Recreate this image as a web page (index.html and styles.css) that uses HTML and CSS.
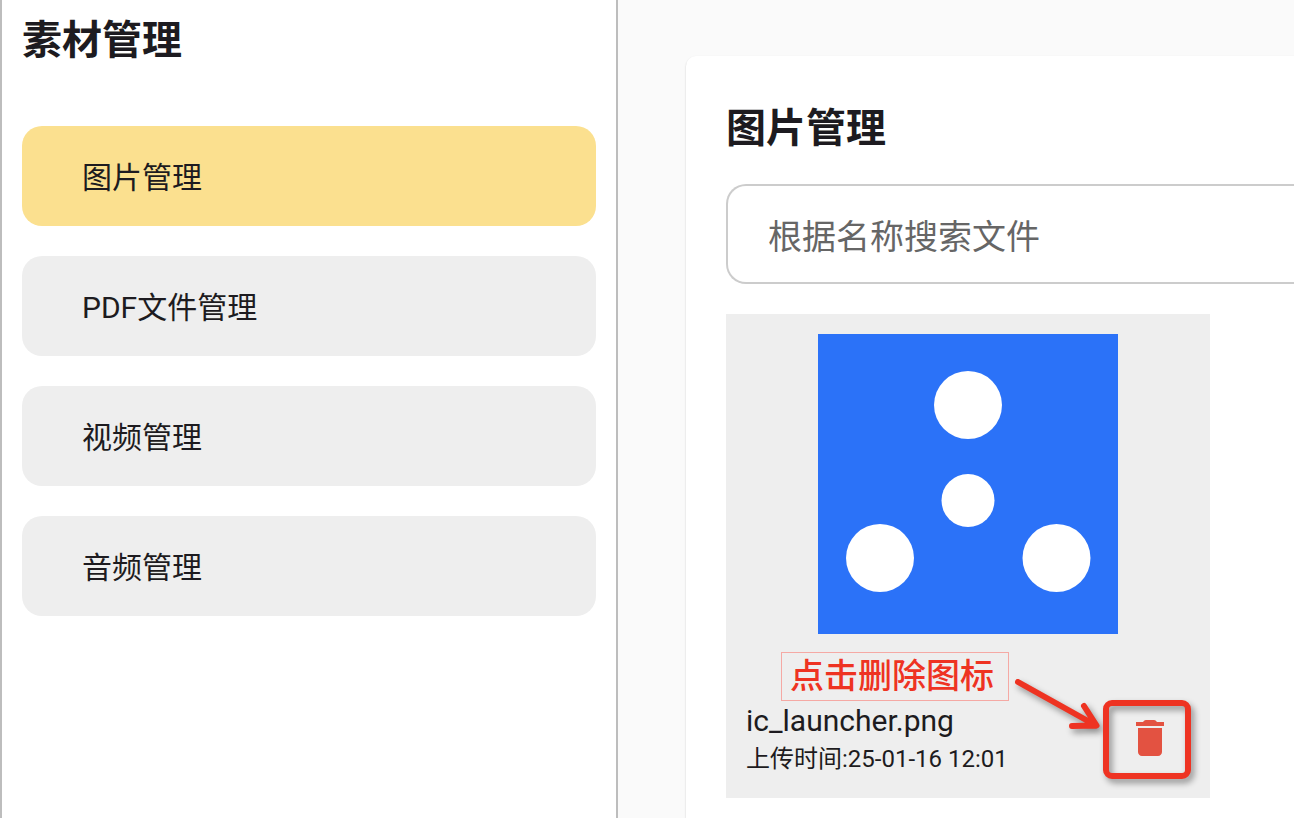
FILE: index.html
```html
<!DOCTYPE html>
<html lang="zh-CN">
<head>
    <meta charset="UTF-8">
    <meta name="viewport" content="width=device-width, initial-scale=1.0">
    <title>素材管理</title>
    <link rel="stylesheet" href="styles.css">
</head>
<body>
    <!-- Sidebar -->
    <div class="sidebar">
        <h1 class="title">素材管理</h1>
        <nav class="nav-links">
            <a href="#" class="active">图片管理</a>
            <a href="#">PDF文件管理</a>
            <a href="#">视频管理</a>
            <a href="#">音频管理</a>
        </nav>
    </div>

    <!-- Main Content -->
    <div class="content">
        <div class="panel">
            <h2 class="title">图片管理</h2>
            <input type="text" class="search-bar" placeholder="根据名称搜索文件" aria-label="根据名称搜索文件">

            <div class="file-card">
                <svg class="preview" viewBox="0 0 300 300" role="img" aria-label="ic_launcher.png">
                    <rect width="300" height="300" fill="#2b72f8"/>
                    <g fill="#fff">
                        <circle cx="150" cy="71" r="34"/>
                        <circle cx="150" cy="166.500" r="26.500"/>
                        <circle cx="62" cy="224" r="34"/>
                        <circle cx="238.500" cy="224" r="34"/>
                    </g>
                </svg>
                <div class="file-row">
                    <div class="file-info">
                        <div class="file-name">ic_launcher.png</div>
                        <div class="file-time">上传时间:25-01-16 12:01</div>
                    </div>
                    <button type="button" class="delete-btn" aria-label="删除">
                        <svg viewBox="0 0 24 24" fill="currentColor">
                            <path d="M6 19c0 1.1.9 2 2 2h8c1.1 0 2-.9 2-2V7H6v12zM19 4h-3.500l-.7-.7c-.2-.2-.45-.3-.7-.3H9.900c-.25 0-.5.1-.7.3L8.500 4H5v2h14V4z"/>
                        </svg>
                    </button>
                </div>

                <!-- Hint over the card -->
                <div class="hint">点击删除图标</div>
                <svg class="hint-marks" viewBox="0 0 484 484" aria-hidden="true">
                    <path d="M292 368L370 411.500M358 392l12.500 19.500L346 412"/>
                    <rect x="380" y="389" width="82" height="73" rx="6"/>
                </svg>
            </div>
        </div>
    </div>
</body>
</html>
```
FILE: styles.css
```css
/* Global Styles */
* {
    box-sizing: border-box;
}
body {
    margin: 0;
    font-family: Roboto, 'Noto Sans CJK SC', sans-serif;
    background-color: #fafafa;
    color: #1d1b20;
    display: flex;
    min-height: 100vh;
    overflow-x: hidden;
}
.title {
    margin: 0;
    font-size: 40px;
    line-height: 50px;
    font-weight: bold;
}

/* Sidebar Styles */
.sidebar {
    flex: 0 0 618px;
    padding: 16px 20px;
    background-color: #fff;
    border-left: 2px solid #bdbdbd;
    border-right: 2px solid #bdbdbd;
}
.nav-links {
    margin-top: 60px;
    display: flex;
    flex-direction: column;
    gap: 30px;
}
.nav-links a {
    height: 100px;
    padding: 0 60px 2px;
    display: flex;
    align-items: center;
    border-radius: 20px;
    background-color: #eee;
    color: inherit;
    font-size: 30px;
    text-decoration: none;
}
.nav-links a.active {
    background-color: #fbe08f;
}

/* Main Content Styles */
.content {
    flex: 1;
    min-width: 0;
    padding: 56px 0 0 68px;
    display: flex;
}
.panel {
    flex: 1;
    min-width: 0;
    padding: 48px 0 20px 40px;
    background-color: #fff;
    border-radius: 10px 0 0 0;
    box-shadow: 0 1px 2px rgba(0, 0, 0, 0.2);
}
.search-bar {
    display: block;
    width: 100%;
    height: 100px;
    margin: 30px 0;
    padding: 6px 40px 0;
    border: 2px solid #ccc;
    border-right: none;
    border-radius: 20px 0 0 20px;
    background-color: #fff;
    color: inherit;
    font-family: inherit;
    font-size: 34px;
    outline: none;
}
.search-bar::placeholder {
    color: #666;
    opacity: 1;
}

/* File Card Styles */
.file-card {
    position: relative;
    width: 484px;
    height: 484px;
    padding: 20px;
    background-color: #eee;
}
.preview {
    display: block;
    width: 300px;
    height: 300px;
    margin: 0 auto;
}
.file-row {
    margin-top: 66px;
    display: flex;
    justify-content: space-between;
    align-items: center;
}
.file-name {
    font-size: 30px;
    line-height: 42px;
}
.file-time {
    font-size: 24px;
    line-height: 34px;
}
.delete-btn {
    width: 80px;
    height: 48px;
    padding: 0 16px;
    border: none;
    background: none;
    color: #e35241;
    cursor: pointer;
}
.delete-btn svg {
    display: block;
    width: 48px;
    height: 48px;
}

/* Hint Styles */
.hint {
    position: absolute;
    top: 338px;
    left: 55px;
    width: 228px;
    padding: 0 8px;
    border: 1px solid #f5a9a4;
    color: #ee3322;
    font-size: 34px;
    line-height: 47px;
    font-weight: 500;
    white-space: nowrap;
}
.hint-marks {
    position: absolute;
    inset: 0;
    width: 100%;
    height: 100%;
    fill: none;
    stroke: #ee3322;
    stroke-width: 6px;
    stroke-linecap: round;
    stroke-linejoin: round;
    filter: drop-shadow(3px 4px 3px rgba(0, 0, 0, 0.4));
    pointer-events: none;
}
```
